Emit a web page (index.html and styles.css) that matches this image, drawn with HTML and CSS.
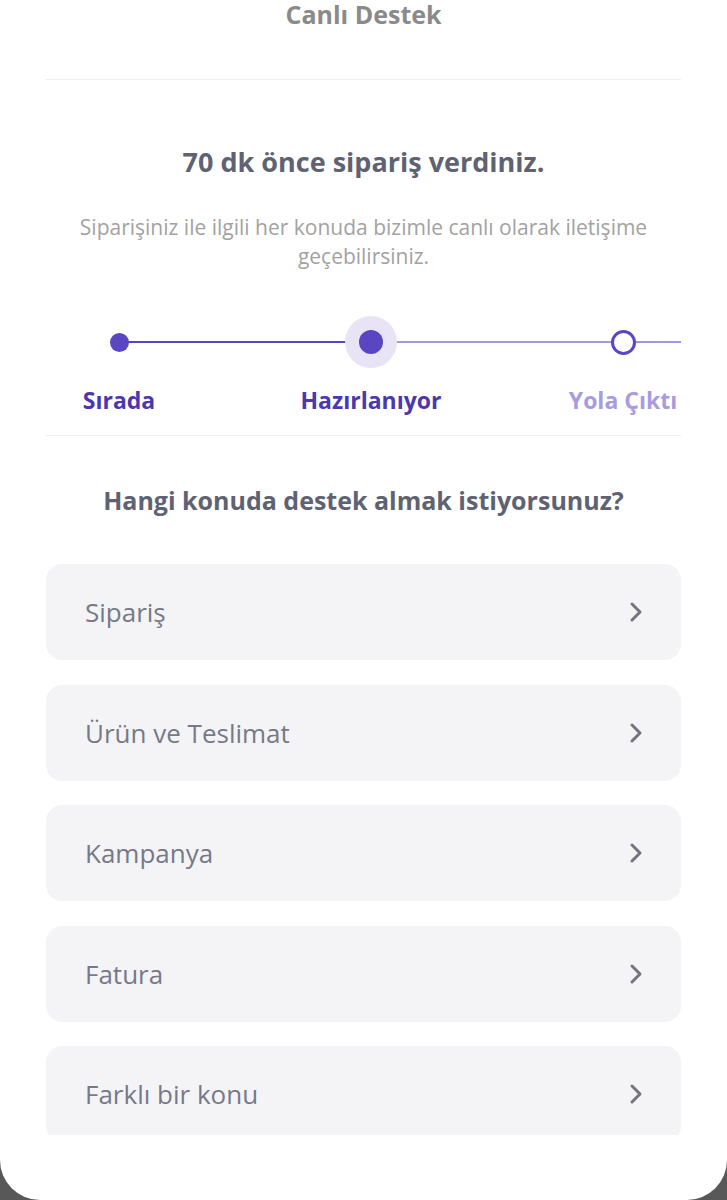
FILE: index.html
```html
<!DOCTYPE html>
<html lang="tr">
<head>
    <meta charset="UTF-8">
    <meta name="viewport" content="width=device-width, initial-scale=1.0">
    <title>Canlı Destek</title>
    <link rel="stylesheet" href="styles.css">
</head>
<body>
    <div class="sheet">
        <div class="inner">
            <!-- Header -->
            <div class="header">
                <h1>Canlı Destek</h1>
            </div>

            <!-- Order status -->
            <div class="status">
                <h2>70 dk önce sipariş verdiniz.</h2>
                <p>Siparişiniz ile ilgili her konuda bizimle canlı olarak iletişime geçebilirsiniz.</p>

                <div class="steps">
                    <div class="track"></div>
                    <div class="step done">
                        <span class="dot"></span>
                        <span class="label">Sırada</span>
                    </div>
                    <div class="step current">
                        <span class="dot"></span>
                        <span class="label">Hazırlanıyor</span>
                    </div>
                    <div class="step next">
                        <span class="dot"></span>
                        <span class="label">Yola Çıktı</span>
                    </div>
                </div>
            </div>

            <!-- Topics -->
            <h3 class="question">Hangi konuda destek almak istiyorsunuz?</h3>
            <div class="topics">
                <a class="topic" href="#">Sipariş
                    <svg width="14" height="22" viewBox="0 0 14 22"><path d="M3 3l8 8-8 8" fill="none" stroke="currentColor" stroke-width="3" stroke-linecap="round" stroke-linejoin="round"/></svg>
                </a>
                <a class="topic" href="#">Ürün ve Teslimat
                    <svg width="14" height="22" viewBox="0 0 14 22"><path d="M3 3l8 8-8 8" fill="none" stroke="currentColor" stroke-width="3" stroke-linecap="round" stroke-linejoin="round"/></svg>
                </a>
                <a class="topic" href="#">Kampanya
                    <svg width="14" height="22" viewBox="0 0 14 22"><path d="M3 3l8 8-8 8" fill="none" stroke="currentColor" stroke-width="3" stroke-linecap="round" stroke-linejoin="round"/></svg>
                </a>
                <a class="topic" href="#">Fatura
                    <svg width="14" height="22" viewBox="0 0 14 22"><path d="M3 3l8 8-8 8" fill="none" stroke="currentColor" stroke-width="3" stroke-linecap="round" stroke-linejoin="round"/></svg>
                </a>
                <a class="topic" href="#">Farklı bir konu
                    <svg width="14" height="22" viewBox="0 0 14 22"><path d="M3 3l8 8-8 8" fill="none" stroke="currentColor" stroke-width="3" stroke-linecap="round" stroke-linejoin="round"/></svg>
                </a>
            </div>
        </div>
    </div>
</body>
</html>
```
FILE: styles.css
```css
* {
    box-sizing: border-box;
}
body {
    margin: 0;
    background-color: #585858;
    font-family: "Open Sans", "Noto Sans", sans-serif;
}
.sheet {
    width: 727px;
    height: 1200px;
    background-color: #fff;
    border-radius: 0 0 40px 40px;
    overflow: hidden;
}
.inner {
    padding: 0 46px;
}
.header {
    height: 80px;
    border-bottom: 1px solid #efeff3;
    text-align: center;
}
.header h1 {
    margin: 0;
    font-size: 25px;
    line-height: 28px;
    font-weight: 700;
    color: #8a8a8a;
}
.status {
    padding-top: 66px;
    padding-bottom: 20px;
    border-bottom: 1px solid #efeff3;
    text-align: center;
}
.status h2 {
    margin: 0;
    font-size: 27px;
    line-height: 32px;
    font-weight: 700;
    color: #5e6272;
}
.status p {
    margin: 35px 0 0;
    padding: 0 20px;
    font-size: 21px;
    line-height: 29px;
    color: #a2a2a2;
}
.steps {
    position: relative;
    display: flex;
    gap: 106px;
    margin-top: 45px;
}
.track {
    position: absolute;
    left: 73px;
    right: 0;
    top: 25px;
    height: 2px;
    background: linear-gradient(to right, #5a45c0 252px, #a497e0 252px);
}
.step {
    position: relative;
    flex: none;
    width: 146px;
    display: flex;
    flex-direction: column;
    align-items: center;
    gap: 17px;
}
.dot {
    width: 52px;
    height: 52px;
    display: flex;
    align-items: center;
    justify-content: center;
}
.dot::before {
    content: "";
    display: block;
    border-radius: 50%;
}
.done .dot::before {
    width: 19px;
    height: 19px;
    background-color: #5a45c2;
}
.current .dot {
    border-radius: 50%;
    background-color: #e8e4f6;
}
.current .dot::before {
    width: 24px;
    height: 24px;
    background-color: #5a45c2;
}
.next .dot::before {
    width: 19px;
    height: 19px;
    border: 3px solid #5a45c2;
    background-color: #fff;
}
.label {
    white-space: nowrap;
    font-size: 23px;
    line-height: 30px;
    font-weight: 700;
    color: #4b37b2;
}
.next .label {
    color: #a89be0;
}
.question {
    margin: 0;
    padding: 49px 0;
    text-align: center;
    font-size: 25px;
    line-height: 30px;
    font-weight: 700;
    color: #5e6272;
}
.topics {
    height: 571px;
    overflow: hidden;
    display: flex;
    flex-direction: column;
    gap: 24.5px;
}
.topic {
    flex: none;
    height: 96px;
    padding: 0 38px 0 39px;
    display: flex;
    align-items: center;
    justify-content: space-between;
    border-radius: 16px;
    background-color: #f4f4f6;
    text-decoration: none;
    font-size: 26px;
    color: #767988;
}
.topic svg {
    color: #72757f;
}
```
